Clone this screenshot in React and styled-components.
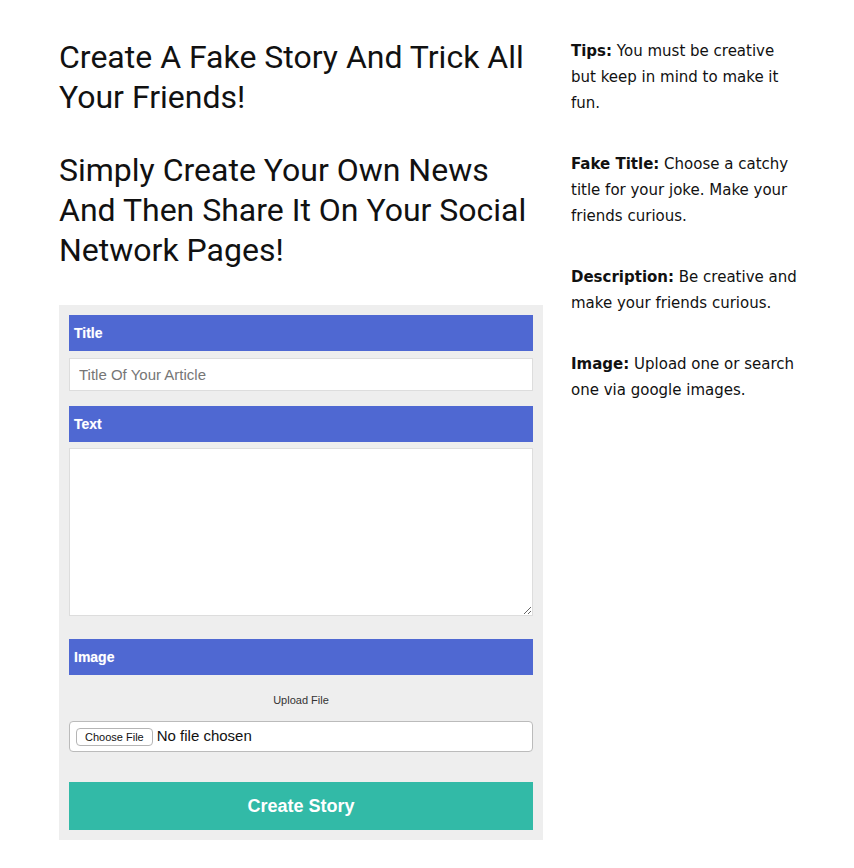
import React from "react";
import styled, { createGlobalStyle } from "styled-components";

const GlobalStyle = createGlobalStyle`
  body {
    margin: 0;
    background: #fff;
    font-family: "Liberation Sans", Arial, sans-serif;
  }
`;

const tips = [
  { title: "Tips:", text: "You must be creative but keep in mind to make it fun." },
  { title: "Fake Title:", text: "Choose a catchy title for your joke. Make your friends curious." },
  { title: "Description:", text: "Be creative and make your friends curious." },
  { title: "Image:", text: "Upload one or search one via google images." },
];

const App = () => {
  return (
    <Page>
      <GlobalStyle />
      <Main>
        <Heading>Create A Fake Story And Trick All Your Friends!</Heading>
        <Heading second>Simply Create Your Own News And Then Share It On Your Social Network Pages!</Heading>
        <Panel>
          <LabelBar>Title</LabelBar>
          <TextInput type="text" placeholder="Title Of Your Article" />
          <LabelBar spaced>Text</LabelBar>
          <TextArea />
          <LabelBar spaced="big">Image</LabelBar>
          <UploadHint>Upload File</UploadHint>
          <FileInput type="file" />
          <SubmitButton type="button">Create Story</SubmitButton>
        </Panel>
      </Main>
      <Side>
        {tips.map((t) => (
          <Tip key={t.title}>
            <b>{t.title}</b> {t.text}
          </Tip>
        ))}
      </Side>
    </Page>
  );
};

const Page = styled.div`
  display: flex;
  align-items: flex-start;
  gap: 28px;
  padding: 37px 0 28px 59px;
`;

const Main = styled.div`
  width: 484px;
  display: flex;
  flex-direction: column;
`;

const Heading = styled.h1`
  margin: ${(p) => (p.second ? "33px 0 35px" : "0")};
  font-family: Roboto, "Liberation Sans", sans-serif;
  font-weight: 400;
  font-size: 32px;
  line-height: 40px;
  color: #111;
`;

const Panel = styled.form`
  background: #eeeeee;
  padding: 10px;
  display: flex;
  flex-direction: column;
`;

const LabelBar = styled.div`
  height: 36px;
  display: flex;
  align-items: center;
  padding-left: 5px;
  margin-top: ${(p) => (p.spaced === "big" ? "23px" : p.spaced ? "15px" : "0")};
  background: #4f68d2;
  color: #fff;
  font-size: 14px;
  font-weight: 700;
  text-shadow: 0 0 1px rgba(255, 255, 255, 0.4);
`;

const TextInput = styled.input`
  box-sizing: border-box;
  margin-top: 7px;
  height: 33px;
  border: 1px solid #dddddd;
  padding: 0 9px;
  font-family: "Liberation Sans", Arial, sans-serif;
  font-size: 15px;
  outline: none;
  &::placeholder {
    color: #767676;
  }
`;

const TextArea = styled.textarea`
  box-sizing: border-box;
  margin-top: 6px;
  height: 168px;
  border: 1px solid #dddddd;
  resize: vertical;
  outline: none;
  font-family: "Liberation Sans", Arial, sans-serif;
`;

const UploadHint = styled.div`
  margin-top: 18px;
  text-align: center;
  font-size: 11px;
  line-height: 14px;
  color: #333;
`;

const FileInput = styled.input`
  box-sizing: border-box;
  margin-top: 14px;
  height: 31px;
  padding: 0 6px;
  background: #fff;
  border: 1px solid #bbbbbb;
  border-radius: 4px;
  font-family: "Liberation Sans", Arial, sans-serif;
  font-size: 15px;
  color: #111;
  display: flex;
  align-items: center;
  &::file-selector-button {
    margin: 6px 4px 0 0;
    height: 18px;
    padding: 0 8px;
    font-family: "Liberation Sans", Arial, sans-serif;
    font-size: 11px;
    background: #fff;
    border: 1px solid #b5b5b5;
    border-radius: 4px;
    color: #111;
  }
`;

const SubmitButton = styled.button`
  margin-top: 30px;
  height: 48px;
  border: none;
  background: #32baa7;
  color: #fff;
  font-family: "Liberation Sans", Arial, sans-serif;
  font-size: 18px;
  font-weight: 700;
  cursor: pointer;
`;

const Side = styled.div`
  width: 232px;
  padding-top: 1px;
  font-family: "DejaVu Sans", Verdana, sans-serif;
  font-size: 15px;
  line-height: 26px;
  color: #111;
`;

const Tip = styled.p`
  margin: 0 0 35px;
  b {
    font-weight: 700;
  }
`;

export default App;
